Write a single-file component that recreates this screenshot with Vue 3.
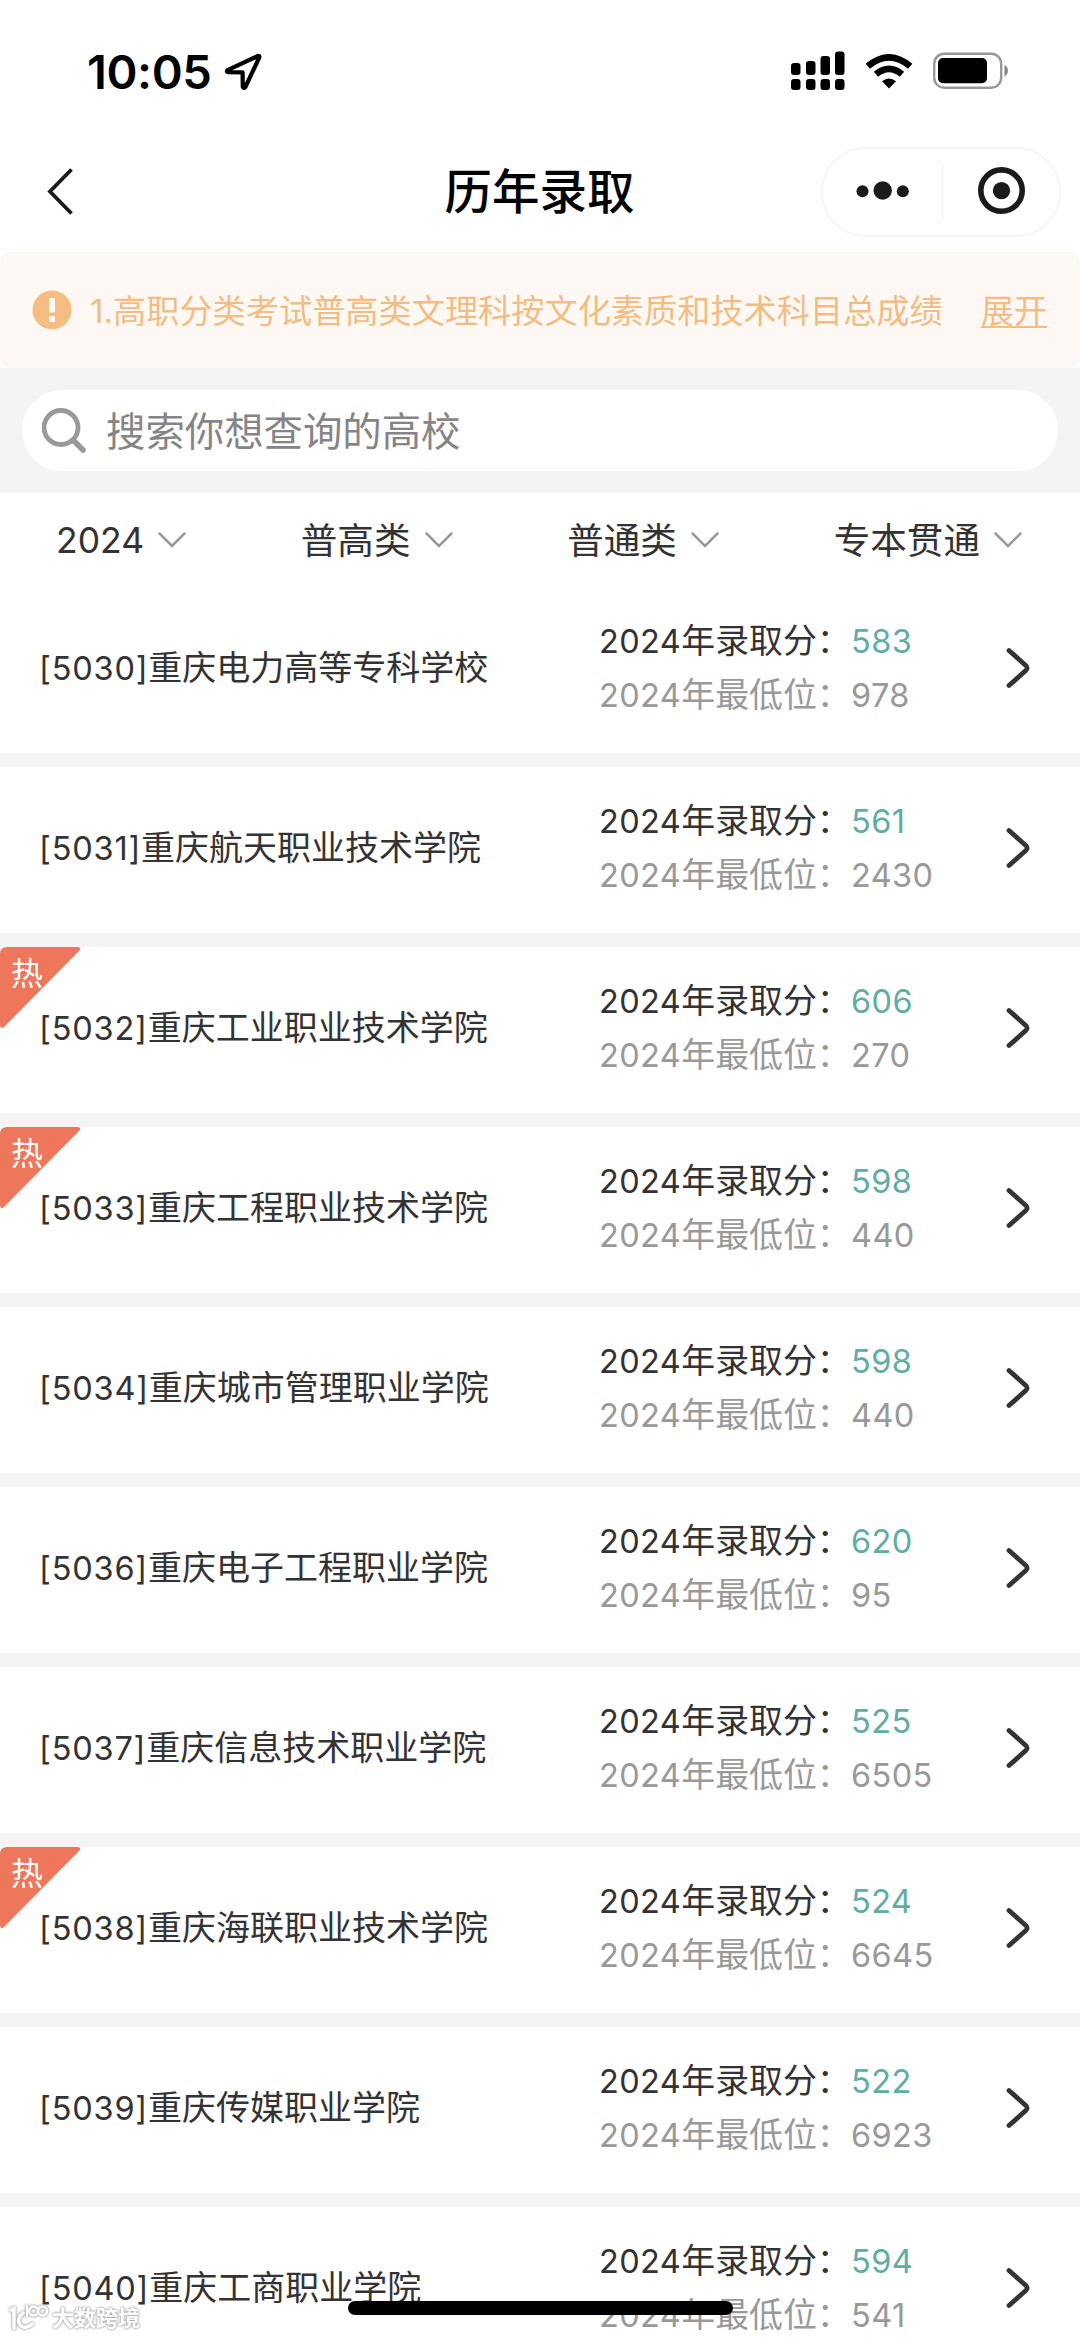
<script setup>
const filters = ['2024', '普高类', '普通类', '专本贯通']

const schools = [
  { code: '5030', name: '重庆电力高等专科学校', score: 583, rank: 978 },
  { code: '5031', name: '重庆航天职业技术学院', score: 561, rank: 2430 },
  { code: '5032', name: '重庆工业职业技术学院', score: 606, rank: 270, hot: true },
  { code: '5033', name: '重庆工程职业技术学院', score: 598, rank: 440, hot: true },
  { code: '5034', name: '重庆城市管理职业学院', score: 598, rank: 440 },
  { code: '5036', name: '重庆电子工程职业学院', score: 620, rank: 95 },
  { code: '5037', name: '重庆信息技术职业学院', score: 525, rank: 6505 },
  { code: '5038', name: '重庆海联职业技术学院', score: 524, rank: 6645, hot: true },
  { code: '5039', name: '重庆传媒职业学院', score: 522, rank: 6923 },
  { code: '5040', name: '重庆工商职业学院', score: 594, rank: 541 },
]
</script>

<template>
  <div class="page">
    <header class="status">
      <div class="clock">
        <span>10:05</span>
        <svg width="38" height="38" viewBox="0 0 38 38">
          <path d="M34 3 L3.5 17.2 Q2 19 4 19.2 L18.6 19.4 L18.8 34 Q20 36 21.4 34 L35.3 4.4 Q35.6 2.4 34 3Z" fill="none" stroke="#000" stroke-width="4.2" stroke-linejoin="round" />
        </svg>
      </div>
      <div class="indicators">
        <svg width="54" height="40" viewBox="0 0 54 40">
          <g fill="#000">
            <rect x="0" y="12" width="9.5" height="12" rx="3" />
            <rect x="15" y="10" width="9.5" height="14" rx="3" />
            <rect x="29.5" y="5" width="9.5" height="19" rx="3" />
            <rect x="44" y="0.5" width="9.5" height="23.5" rx="3" />
            <rect x="0" y="28" width="9.5" height="11" rx="3" />
            <rect x="15" y="28" width="9.5" height="11" rx="3" />
            <rect x="29.5" y="28" width="9.5" height="11" rx="3" />
            <rect x="44" y="28" width="9.5" height="11" rx="3" />
          </g>
        </svg>
        <svg class="wifi" width="48" height="36" viewBox="0 0 48 36">
          <g fill="none" stroke="#000" stroke-width="6.6">
            <path d="M2.8 12.3 Q24 -5.5 45.2 12.3" />
            <path d="M11 20.3 Q24 9.4 37 20.3" />
          </g>
          <path d="M17 27.3 Q24 21.8 31 27.3 L24 34.5Z" fill="#000" />
        </svg>
        <svg class="battery" width="76" height="38" viewBox="0 0 76 38">
          <rect x="1.2" y="1.7" width="67" height="34" rx="10" fill="none" stroke="#999" stroke-width="2.4" />
          <rect x="5" y="6" width="49" height="25.3" rx="5" fill="#000" />
          <path d="M71.5 12.8 Q75 15 75 18.7 Q75 22.4 71.5 24.7Z" fill="#888" />
        </svg>
      </div>
    </header>

    <nav class="navbar">
      <svg class="back" width="30" height="50" viewBox="0 0 30 50">
        <path d="M25.5 2.5 L4 24.5 L25.5 46.5" fill="none" stroke="#1a1a1a" stroke-width="3.8" />
      </svg>
      <h1>历年录取</h1>
      <div class="capsule">
        <svg width="119" height="86" viewBox="0 0 119 86" fill="#1a1a1a">
          <circle cx="39.5" cy="42.2" r="6" />
          <circle cx="59.7" cy="41.5" r="9.2" />
          <circle cx="79.8" cy="42.2" r="6" />
        </svg>
        <i></i>
        <svg width="116" height="86" viewBox="0 0 116 86">
          <circle cx="58.5" cy="41.6" r="20.7" fill="none" stroke="#1a1a1a" stroke-width="5.6" />
          <circle cx="58.5" cy="41.6" r="8.7" fill="#1a1a1a" />
        </svg>
      </div>
    </nav>

    <section class="notice-wrap">
      <div class="notice">
        <svg width="40" height="40" viewBox="0 0 40 40">
          <circle cx="20" cy="20" r="19.5" fill="#f4bd82" />
          <rect x="17" y="8" width="6" height="14.5" fill="#fdf8f4" />
          <rect x="17" y="26" width="6" height="6" fill="#fdf8f4" />
        </svg>
        <p>1.高职分类考试普高类文理科按文化素质和技术科目总成绩</p>
        <a>展开</a>
      </div>
    </section>

    <section class="search-area">
      <div class="search">
        <svg width="46" height="46" viewBox="0 0 46 46" fill="none" stroke="#999">
          <circle cx="19" cy="19.5" r="17" stroke-width="4.8" />
          <path d="M32 33 L41 42" stroke-width="5.6" stroke-linecap="round" />
        </svg>
        <span>搜索你想查询的高校</span>
      </div>
    </section>

    <section class="filters">
      <div v-for="(label, i) in filters" :key="label" class="filter">
        <span :class="{ year: i === 0 }">{{ label }}</span>
        <svg width="28" height="18" viewBox="0 0 28 18">
          <path d="M1.5 2.5 L14 15 L26.5 2.5" fill="none" stroke="#999" stroke-width="2.5" stroke-linecap="round" />
        </svg>
      </div>
    </section>

    <main class="list">
      <article v-for="school in schools" :key="school.code" class="row">
        <div v-if="school.hot" class="hot">
          <svg width="81" height="82" viewBox="0 0 81 82">
            <path d="M0 7 Q0 0 7 0 H77 Q82 0 79.5 3.5 L4 80 Q0 83 0 77Z" fill="#ed765b" />
          </svg>
          <span>热</span>
        </div>
        <h2><span class="num">[{{ school.code }}]</span>{{ school.name }}</h2>
        <div class="facts">
          <p><span class="label"><span class="num">2024</span>年录取分：</span><span class="num score">{{ school.score }}</span></p>
          <p class="muted"><span class="label"><span class="num">2024</span>年最低位：</span><span class="num">{{ school.rank }}</span></p>
        </div>
        <svg class="go" width="26" height="44" viewBox="0 0 26 44">
          <path d="M4 4.5 L20.5 19.2 Q23.8 22 20.5 24.8 L4 39.5" fill="none" stroke="#333" stroke-width="4.8" stroke-linecap="round" />
        </svg>
      </article>
    </main>

    <div class="watermark">
      <svg width="40" height="28" viewBox="0 0 40 28" fill="none" stroke="#fff" stroke-linecap="round">
        <path d="M2 6 L5 4.500 V24" stroke-width="3.4" />
        <path d="M14 9 Q7 15 11 21 Q16 26 23 20" stroke-width="3.6" />
        <path d="M18 2 V12" stroke-width="2.4" />
        <circle cx="24.500" cy="7" r="4.500" stroke-width="2.4" />
        <circle cx="33.500" cy="7" r="4.500" stroke-width="2.4" />
      </svg>
      <span>大数跨境</span>
    </div>
    <div class="home-indicator"></div>
  </div>
</template>

<style>
body {
  margin: 0;
  background: #fff;
}
</style>

<style scoped>
.page {
  position: relative;
  width: 1080px;
  height: 2337px;
  overflow: hidden;
  background: #fff;
  color: #333;
  font-family: Inter, "Noto Sans CJK SC", sans-serif;
}
h1, h2, p {
  margin: 0;
  font-weight: 400;
}
svg {
  display: block;
  flex: none;
}
.status {
  display: flex;
  justify-content: space-between;
  box-sizing: border-box;
  height: 132px;
  padding: 51px 71px 0 87px;
}
.clock {
  display: flex;
  align-items: center;
  gap: 13px;
  height: 42px;
  color: #000;
  font-size: 47px;
  font-weight: 600;
  letter-spacing: -0.4px;
}
.clock span {
  margin-top: -2px;
}
.indicators {
  display: flex;
  align-items: flex-start;
}
.wifi {
  margin: 3px 0 0 20px;
}
.battery {
  margin: 1px 0 0 20px;
}
.navbar {
  display: grid;
  grid-template-columns: 1fr auto 1fr;
  align-items: center;
  height: 120px;
  padding: 0 19px 0 46px;
}
.navbar h1 {
  margin-right: 28px;
  color: #000;
  font-size: 47.5px;
  font-weight: 500;
  line-height: 60px;
}
.capsule {
  display: flex;
  align-items: center;
  justify-self: end;
  box-sizing: border-box;
  width: 240px;
  height: 90px;
  border: 2px solid #f5f5f5;
  border-radius: 45px;
}
.capsule i {
  width: 2px;
  height: 56px;
  background: #f0f0f0;
}
.notice-wrap {
  background: #fff;
}
.notice {
  display: flex;
  align-items: center;
  height: 116px;
  padding: 0 33px 0 32px;
  border-radius: 10px;
  background: #fdf8f4;
  color: #f3bc82;
  font-size: 33.2px;
}
.notice p {
  margin: -3px 0 0 18px;
  white-space: nowrap;
}
.notice a {
  margin: -3px 0 0 auto;
  text-decoration: underline;
  text-decoration-thickness: 2px;
  text-underline-offset: 3px;
}
.search-area {
  height: 81px;
  padding: 22px;
  background: #f4f4f4;
}
.search {
  display: flex;
  align-items: center;
  gap: 18px;
  height: 81px;
  padding-left: 20px;
  border-radius: 41px;
  background: #fff;
  color: #858585;
  font-size: 39.4px;
}
.search span {
  margin-top: -4px;
}
.filters {
  display: flex;
  justify-content: space-between;
  height: 94px;
  padding: 0 58px 0 56px;
}
.filter {
  display: flex;
  align-items: center;
  gap: 14px;
  font-size: 36.6px;
}
.filter span {
  margin-top: -4px;
}
.filter .year {
  margin-top: 0;
  font-size: 35.5px;
}
.row {
  position: relative;
  display: flex;
  align-items: center;
  height: 163px;
  padding: 0 0 3px 39px;
  border-bottom: 14px solid #f4f4f4;
}
.row h2 {
  width: 560px;
  font-size: 34px;
  line-height: 48px;
  white-space: nowrap;
}
.num {
  font-size: 32.5px;
  letter-spacing: 0.4px;
}
.row h2 .num {
  letter-spacing: 0.8px;
}
.facts {
  width: 406px;
  font-size: 33.9px;
  line-height: 52.5px;
  white-space: nowrap;
}
.label {
  display: inline-block;
  width: 252px;
}
.score {
  color: #5fada4;
}
.muted {
  color: #999;
}
.go {
  margin-bottom: 2px;
}
.hot {
  position: absolute;
  top: 0;
  left: 0;
  color: #fff;
}
.hot span {
  position: absolute;
  top: 4px;
  left: 11px;
  font-size: 32px;
  line-height: 46px;
}
.watermark {
  position: absolute;
  bottom: 5px;
  left: 9px;
  display: flex;
  align-items: center;
  gap: 3px;
  color: #fff;
  font-size: 22px;
  font-weight: 700;
  line-height: 28px;
  filter: drop-shadow(0 0 1px #aaa) drop-shadow(0 0 1px #bbb);
}
.home-indicator {
  position: absolute;
  bottom: 22px;
  left: 348px;
  width: 385px;
  height: 14px;
  border-radius: 7px;
  background: #000;
}
</style>
